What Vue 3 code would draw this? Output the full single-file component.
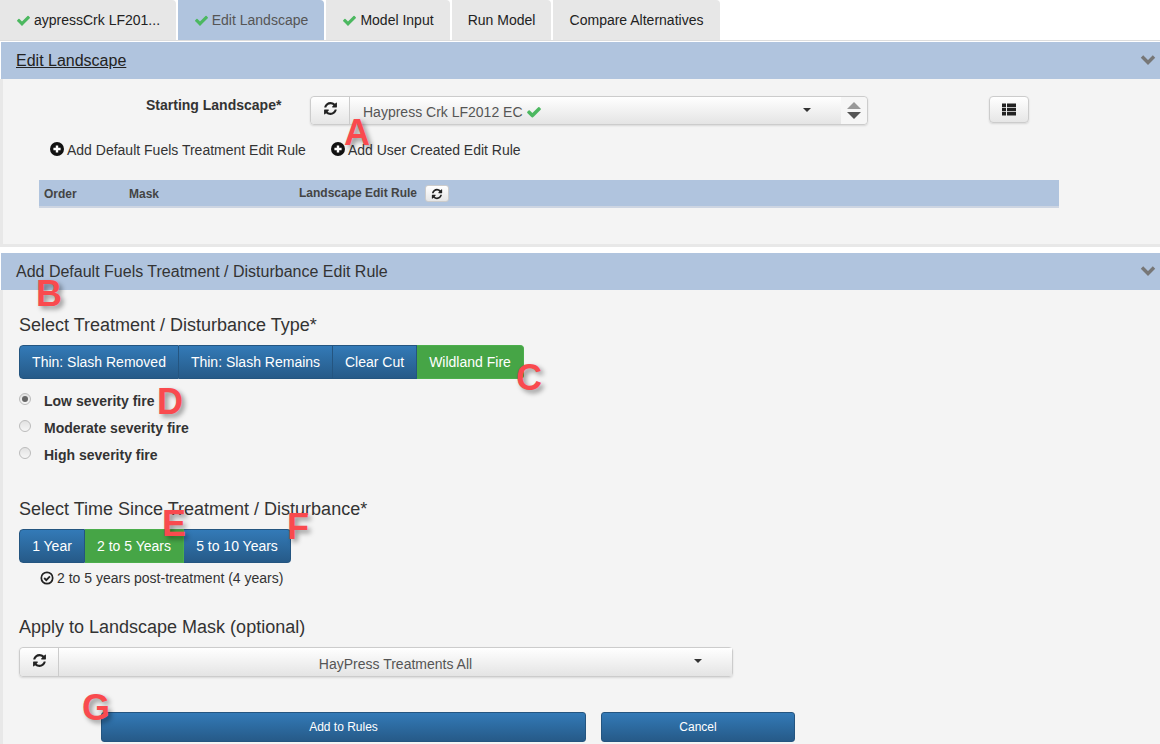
<script setup>
const checkPath = 'M1671 566q0 40-28 68l-724 724-136 136q-28 28-68 28t-68-28l-136-136-362-362q-28-28-28-68t28-68l136-136q28-28 68-28t68 28l294 295 656-657q28-28 68-28t68 28l136 136q28 28 28 68z'
const refreshPath = 'M1639 1056q0 5-1 7-64 268-268 434.5t-478 166.5q-146 0-282.5-55t-243.5-157l-129 129q-19 19-45 19t-45-19-19-45v-448q0-26 19-45t45-19h448q26 0 45 19t19 45-19 45l-137 137q71 66 161 102t187 36q134 0 250-65t186-179q11-17 53-117 8-23 30-23h192q13 0 22.5 9.5t9.5 22.5zm25-800v448q0 26-19 45t-45 19h-448q-26 0-45-19t-19-45 19-45l138-138q-148-137-349-137-134 0-250 65t-186 179q-11 17-53 117-8 23-30 23h-199q-13 0-22.5-9.5t-9.5-22.5v-7q65-268 270-434.5t480-166.5q146 0 284 55.5t245 156.5l130-129q19-19 45-19t45 19 19 45z'

const tabs = [
  { label: 'aypressCrk LF201...', check: true, width: 176 },
  { label: 'Edit Landscape', check: true, active: true, width: 146 },
  { label: 'Model Input', check: true, width: 124 },
  { label: 'Run Model', width: 99 },
  { label: 'Compare Alternatives', width: 167 }
]
const treatments = [
  { label: 'Thin: Slash Removed', width: 160 },
  { label: 'Thin: Slash Remains', width: 154 },
  { label: 'Clear Cut', width: 84 },
  { label: 'Wildland Fire', width: 107, on: true }
]
const times = [
  { label: '1 Year', width: 66 },
  { label: '2 to 5 Years', width: 99, on: true },
  { label: '5 to 10 Years', width: 107 }
]
const severities = ['Low severity fire', 'Moderate severity fire', 'High severity fire']
const letters = [
  { t: 'A', x: 344, y: 113 },
  { t: 'B', x: 36, y: 274 },
  { t: 'C', x: 516, y: 358 },
  { t: 'D', x: 157, y: 382 },
  { t: 'E', x: 162, y: 504 },
  { t: 'F', x: 287, y: 507 },
  { t: 'G', x: 82, y: 688 }
]
</script>

<template>
  <div class="page">
    <nav class="tabs">
      <div
        v-for="tab in tabs"
        :key="tab.label"
        class="tab"
        :class="{ active: tab.active }"
        :style="{ width: tab.width + 'px' }"
      >
        <svg v-if="tab.check" class="check" viewBox="0 0 1792 1792"><path :d="checkPath" /></svg>
        <span>{{ tab.label }}</span>
      </div>
    </nav>

    <section class="panel first">
      <header class="panel-head">
        <u>Edit Landscape</u>
        <svg class="chev" viewBox="0 0 16 12"><path d="M2 2.5l6 6 6-6" /></svg>
      </header>
      <div class="panel-body body-one">
        <div class="start-row">
          <label class="start-label">Starting Landscape*</label>
          <div class="select-group wide">
            <button class="addon">
              <svg class="refresh" viewBox="0 0 1792 1792"><path :d="refreshPath" /></svg>
            </button>
            <div class="select-main left">
              <span>Haypress Crk LF2012 EC</span>
              <svg class="check inline" viewBox="0 0 1792 1792"><path :d="checkPath" /></svg>
              <i class="caret"></i>
            </div>
            <div class="spinner">
              <i class="up"></i>
              <i class="down"></i>
            </div>
          </div>
          <button class="list-btn">
            <svg viewBox="0 0 14 12" width="14" height="13">
              <path d="M0 0h4v3.4H0zM5 0h9v3.4H5zM0 4.3h4v3.4H0zM5 4.3h9v3.4H5zM0 8.6h4V12H0zM5 8.6h9V12H5z" fill="#222" />
            </svg>
          </button>
        </div>
        <div class="links">
          <a class="link">
            <svg class="plus" viewBox="0 0 14 14"><circle cx="7" cy="7" r="7" /><path d="M3.4 5.8h7.2v2.4H3.4zM5.8 3.4h2.4v7.2H5.8z" fill="#fff" /></svg>
            Add Default Fuels Treatment Edit Rule
          </a>
          <a class="link">
            <svg class="plus" viewBox="0 0 14 14"><circle cx="7" cy="7" r="7" /><path d="M3.4 5.8h7.2v2.4H3.4zM5.8 3.4h2.4v7.2H5.8z" fill="#fff" /></svg>
            Add User Created Edit Rule
          </a>
        </div>
        <div class="table-head">
          <span class="col-order">Order</span>
          <span class="col-mask">Mask</span>
          <span class="col-rule">Landscape Edit Rule</span>
          <button class="mini">
            <svg class="refresh small" viewBox="0 0 1792 1792"><path :d="refreshPath" /></svg>
          </button>
        </div>
      </div>
    </section>

    <section class="panel second">
      <header class="panel-head">
        <span>Add Default Fuels Treatment / Disturbance Edit Rule</span>
        <svg class="chev" viewBox="0 0 16 12"><path d="M2 2.5l6 6 6-6" /></svg>
      </header>
      <div class="panel-body body-two">
        <h4 class="title">Select Treatment / Disturbance Type*</h4>
        <div class="btn-group">
          <button
            v-for="b in treatments"
            :key="b.label"
            class="seg"
            :class="{ on: b.on }"
            :style="{ width: b.width + 'px' }"
          >{{ b.label }}</button>
        </div>
        <div class="radios">
          <label v-for="(s, i) in severities" :key="s" class="radio">
            <span class="dot" :class="{ sel: i === 0 }"></span>
            <b>{{ s }}</b>
          </label>
        </div>
        <h4 class="title time-title">Select Time Since Treatment / Disturbance*</h4>
        <div class="btn-group">
          <button
            v-for="b in times"
            :key="b.label"
            class="seg"
            :class="{ on: b.on }"
            :style="{ width: b.width + 'px' }"
          >{{ b.label }}</button>
        </div>
        <p class="note">
          <svg viewBox="0 0 14 14" width="14" height="14">
            <circle cx="7" cy="7" r="5.7" fill="none" stroke="#222" stroke-width="1.7" />
            <path d="M4.2 7l2.1 2.1 3.6-3.7" fill="none" stroke="#222" stroke-width="1.8" />
          </svg>
          2 to 5 years post-treatment (4 years)
        </p>
        <h4 class="title mask-title">Apply to Landscape Mask (optional)</h4>
        <div class="select-group mask">
          <button class="addon narrow">
            <svg class="refresh" viewBox="0 0 1792 1792"><path :d="refreshPath" /></svg>
          </button>
          <div class="select-main center">
            <span>HayPress Treatments All</span>
            <i class="caret"></i>
          </div>
        </div>
        <div class="actions">
          <button class="action add">Add to Rules</button>
          <button class="action cancel">Cancel</button>
        </div>
      </div>
    </section>

    <span
      v-for="l in letters"
      :key="l.t"
      class="letter"
      :style="{ left: l.x + 'px', top: l.y + 'px' }"
    >{{ l.t }}</span>
  </div>
</template>

<style>
html, body { margin: 0; background: #fff; overflow: hidden; }
</style>

<style scoped>
.page {
  position: relative;
  width: 1160px;
  height: 744px;
  overflow: hidden;
  font-family: "Liberation Sans", Arial, sans-serif;
  color: #333;
  background: #fff;
}
.tabs {
  display: flex;
  gap: 2px;
  height: 40px;
  border-bottom: 1px solid #ddd;
}
.tab {
  box-sizing: border-box;
  height: 40px;
  display: flex;
  align-items: center;
  justify-content: center;
  gap: 3px;
  background: #e7e7e7;
  border-radius: 0 4px 0 0;
  font-size: 14px;
  color: #222;
}
.tab.active { background: #b0c4de; color: #555; }
.check { width: 15px; height: 15px; fill: #4cb860; flex: none; }
.check.inline { width: 16px; height: 16px; margin-left: 3px; }

.first { margin-top: 1px; }
.second { margin-top: 6px; }
.panel-head {
  box-sizing: border-box;
  height: 37px;
  margin-left: 1px;
  padding: 0 4px 0 15px;
  display: flex;
  align-items: center;
  justify-content: space-between;
  background: #b0c4de;
  font-size: 16px;
  color: #333;
}
.panel-head u { color: #222; }
.chev { width: 16px; height: 12px; fill: none; stroke: #777; stroke-width: 3.4; margin-top: -2px; }
.panel-body {
  box-sizing: border-box;
  background: #f4f4f4;
  border-left: 3px solid #e8e8e8;
}
.body-one {
  height: 168px;
  border-bottom: 3px solid #e8e8e8;
  padding-top: 17px;
}
.start-row {
  display: flex;
  align-items: flex-start;
  height: 29px;
}
.start-label {
  width: 307px;
  padding-left: 143px;
  box-sizing: border-box;
  font-size: 14px;
  font-weight: 700;
  line-height: 18px;
}
.select-group {
  display: flex;
  height: 30px;
  box-sizing: border-box;
  border: 1px solid #ccc;
  border-radius: 4px;
  box-shadow: 0 1px 2px rgba(0,0,0,.12);
}
.select-group.wide { width: 558px; height: 29px; }
.select-group.mask { width: 714px; }
.addon {
  width: 39px;
  padding: 0 0 4px;
  border: 0;
  border-right: 1px solid #ccc;
  border-radius: 4px 0 0 4px;
  background: linear-gradient(#fff, #e6e6e6);
  display: flex;
  align-items: center;
  justify-content: center;
}
.refresh { width: 15px; height: 15px; fill: #222; }
.refresh.small { width: 12px; height: 12px; }
.select-main {
  position: relative;
  flex: 1;
  display: flex;
  align-items: center;
  font-size: 14px;
  color: #555;
  background: linear-gradient(#fff, #e4e4e4);
  padding-top: 3px;
  box-sizing: border-box;
}
.select-main.left { padding-left: 13px; }
.select-main.center { justify-content: center; }
.caret {
  position: absolute;
  right: 30px;
  top: 11px;
  width: 0;
  height: 0;
  border-left: 4px solid transparent;
  border-right: 4px solid transparent;
  border-top: 4px solid #333;
}
.spinner {
  width: 26px;
  display: flex;
  flex-direction: column;
  align-items: center;
  justify-content: center;
  gap: 3px;
  background: #f6f6f6;
  border-radius: 0 4px 4px 0;
}
.spinner .up {
  width: 0; height: 0;
  border-left: 7px solid transparent;
  border-right: 7px solid transparent;
  border-bottom: 7px solid #999;
}
.spinner .down {
  width: 0; height: 0;
  border-left: 7px solid transparent;
  border-right: 7px solid transparent;
  border-top: 7px solid #555;
}
.list-btn {
  width: 40px;
  height: 27px;
  margin-left: 121px;
  padding: 0;
  border: 1px solid #ccc;
  border-radius: 4px;
  background: linear-gradient(#fff, #e6e6e6);
  box-shadow: 0 1px 2px rgba(0,0,0,.12);
  display: flex;
  align-items: center;
  justify-content: center;
}
.links {
  display: flex;
  gap: 25px;
  margin: 13px 0 0 47px;
  height: 24px;
  align-items: center;
  font-size: 14px;
  color: #333;
}
.link { display: flex; align-items: center; gap: 3px; }
.plus { width: 14px; height: 14px; fill: #111; margin-top: -2px; }
.table-head {
  width: 1020px;
  height: 28px;
  margin: 18px 0 0 36px;
  box-sizing: border-box;
  background: #b0c4de;
  border-bottom: 2px solid #cdd5e2;
  font-size: 12px;
  font-weight: 700;
  color: #444;
  display: flex;
  align-items: center;
  padding-top: 1px;
}
.col-order { width: 90px; padding-left: 5px; box-sizing: border-box; }
.col-mask { width: 170px; box-sizing: border-box; }
.col-rule { margin-top: -2px; width: 126px; }
.mini {
  width: 24px;
  height: 17px;
  padding: 0;
  border: 1px solid #ccc;
  border-radius: 3px;
  background: linear-gradient(#fff, #e6e6e6);
  display: flex;
  align-items: center;
  justify-content: center;
}

.body-two {
  height: 454px;
  padding: 25px 0 0 16px;
}
.title {
  margin: 0;
  font-size: 18px;
  font-weight: 400;
  line-height: 20px;
  height: 20px;
  color: #333;
}
.btn-group {
  display: flex;
  margin-top: 10px;
}
.seg {
  box-sizing: border-box;
  height: 34px;
  padding: 0;
  border: 1px solid #245580;
  border-left-width: 0;
  background: linear-gradient(#337ab7, #265a88);
  color: #fff;
  font: 14px "Liberation Sans", Arial, sans-serif;
}
.seg:first-child { border-left-width: 1px; border-radius: 4px 0 0 4px; }
.seg:last-child { border-radius: 0 4px 4px 0; }
.seg.on { background: #46a546; border-color: #4cae4c; }
.radios { padding-top: 8px; }
.radio {
  display: flex;
  align-items: center;
  height: 27px;
  font-size: 14px;
  color: #333;
}
.dot {
  box-sizing: border-box;
  width: 12px;
  height: 12px;
  margin-right: 13px;
  margin-top: -4px;
  border: 1px solid #bbb;
  border-radius: 50%;
  background: linear-gradient(#e2e2e2, #f6f6f6);
  position: relative;
}
.dot.sel::after {
  content: "";
  position: absolute;
  left: 2px;
  top: 2px;
  width: 6px;
  height: 6px;
  border-radius: 50%;
  background: #666;
}
.time-title { margin-top: 31px; }
.note {
  margin: 7px 0 0 21px;
  height: 16px;
  display: flex;
  align-items: center;
  gap: 3px;
  font-size: 14px;
  color: #333;
}
.mask-title { margin-top: 31px; }
.mask { margin-top: 10px; }
.addon.narrow { padding-bottom: 3px; }
.actions {
  display: flex;
  gap: 15px;
  margin: 35px 0 0 82px;
}
.action {
  box-sizing: border-box;
  height: 30px;
  padding: 0;
  border: 1px solid #245580;
  border-radius: 3px;
  background: linear-gradient(#337ab7, #265a88);
  color: #fff;
  font: 12px "Liberation Sans", Arial, sans-serif;
}
.add { width: 485px; }
.cancel { width: 194px; }

.letter {
  position: absolute;
  font-family: "Liberation Sans", sans-serif;
  font-size: 36px;
  font-weight: 700;
  line-height: 40px;
  color: #f94a4e;
  text-shadow: 3px 3px 5px rgba(0,0,0,.4);
}
</style>
